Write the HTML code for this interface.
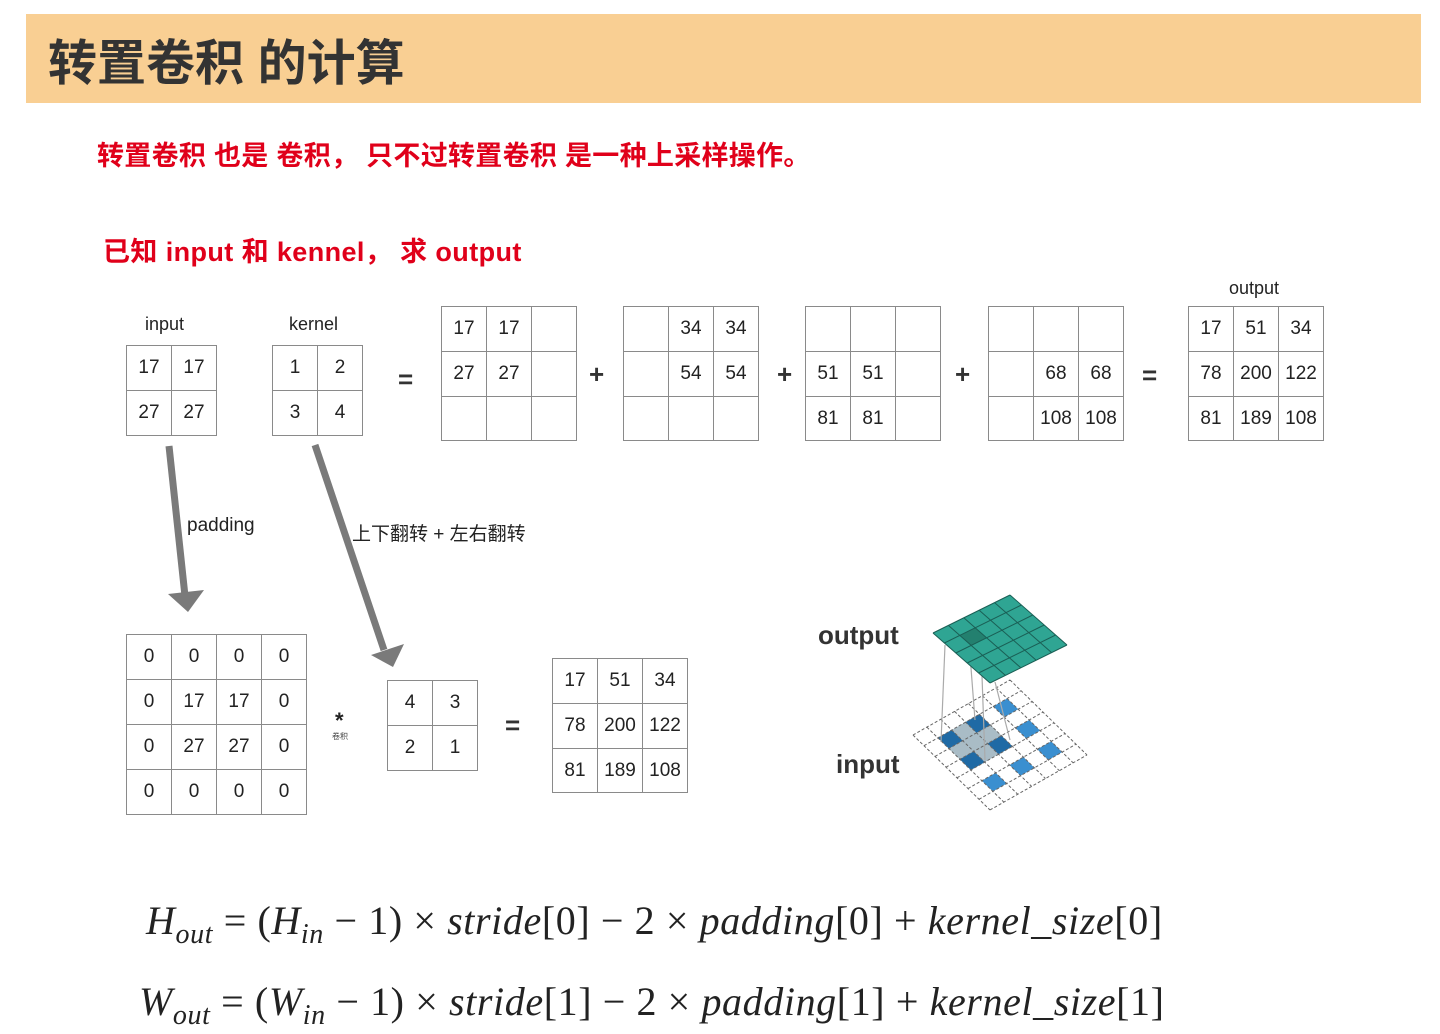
<!DOCTYPE html>
<html><head><meta charset="utf-8"><style>
body{margin:0;width:1440px;height:1034px;background:#fff;position:relative;overflow:hidden;font-family:"Liberation Sans","Noto Sans CJK SC",sans-serif;}
.a{position:absolute;}
.g{position:absolute;border-collapse:collapse;}
.g td{border:1.5px solid #8a8a8a;text-align:center;font-size:19px;color:#222;padding:0;}
.lb{position:absolute;font-size:18px;color:#222;white-space:nowrap;}
.op{position:absolute;font-size:26px;font-weight:bold;color:#333;}
.red{position:absolute;color:#e0001a;font-weight:bold;font-size:27px;font-family:"Liberation Sans","Noto Sans CJK SC",sans-serif;white-space:nowrap;}
.f{position:absolute;font-family:"Liberation Serif","DejaVu Serif",serif;font-style:italic;font-size:40px;letter-spacing:0.6px;color:#222;white-space:nowrap;}
.f span.n{font-style:normal;}
</style></head><body>
<div class="a" style="left:26px;top:14px;width:1395px;height:89px;background:#f9cf93;"></div>
<div class="a" style="left:48px;top:24px;font-size:49px;font-weight:bold;color:#333;font-family:'Liberation Sans','Noto Sans CJK SC',sans-serif;white-space:nowrap;">转置卷积 的计算</div>
<div class="red" style="left:97px;top:134px;letter-spacing:0.3px;">转置卷积 也是 卷积， 只不过转置卷积 是一种上采样操作。</div>
<div class="red" style="left:103px;top:230px;letter-spacing:0.4px;">已知 input 和 kennel， 求 output</div>

<div class="lb" style="left:145px;top:314px;">input</div>
<div class="lb" style="left:289px;top:314px;">kernel</div>
<div class="lb" style="left:1229px;top:278px;">output</div>

<table class="g" style="left:126px;top:345px;"><tr><td style="width:44px;height:44px">17</td><td style="width:44px">17</td></tr><tr><td style="height:44px">27</td><td>27</td></tr></table>
<table class="g" style="left:272px;top:345px;"><tr><td style="width:44px;height:44px">1</td><td style="width:44px">2</td></tr><tr><td style="height:44px">3</td><td>4</td></tr></table>
<div class="op" style="left:398px;top:364px;">=</div>

<table class="g" style="left:441px;top:306px;"><tr><td style="width:44px;height:44px">17</td><td style="width:44px">17</td><td style="width:44px"></td></tr><tr><td style="height:44px">27</td><td>27</td><td></td></tr><tr><td style="height:43px"></td><td></td><td></td></tr></table>
<div class="op" style="left:589px;top:359px;">+</div>
<table class="g" style="left:623px;top:306px;"><tr><td style="width:44px;height:44px"></td><td style="width:44px">34</td><td style="width:44px">34</td></tr><tr><td style="height:44px"></td><td>54</td><td>54</td></tr><tr><td style="height:43px"></td><td></td><td></td></tr></table>
<div class="op" style="left:777px;top:359px;">+</div>
<table class="g" style="left:805px;top:306px;"><tr><td style="width:44px;height:44px"></td><td style="width:44px"></td><td style="width:44px"></td></tr><tr><td style="height:44px">51</td><td>51</td><td></td></tr><tr><td style="height:43px">81</td><td>81</td><td></td></tr></table>
<div class="op" style="left:955px;top:359px;">+</div>
<table class="g" style="left:988px;top:306px;"><tr><td style="width:44px;height:44px"></td><td style="width:44px"></td><td style="width:44px"></td></tr><tr><td style="height:44px"></td><td>68</td><td>68</td></tr><tr><td style="height:43px"></td><td>108</td><td>108</td></tr></table>
<div class="op" style="left:1142px;top:360px;">=</div>
<table class="g" style="left:1188px;top:306px;"><tr><td style="width:44px;height:44px">17</td><td style="width:44px">51</td><td style="width:44px">34</td></tr><tr><td style="height:44px">78</td><td>200</td><td>122</td></tr><tr><td style="height:43px">81</td><td>189</td><td>108</td></tr></table>

<div class="lb" style="left:187px;top:515px;font-size:19px;">padding</div>
<div class="lb" style="left:352px;top:519px;font-size:19px;">上下翻转 + 左右翻转</div>

<table class="g" style="left:126px;top:634px;"><tr><td style="width:44px;height:44px">0</td><td style="width:44px">0</td><td style="width:44px">0</td><td style="width:44px">0</td></tr><tr><td style="height:44px">0</td><td>17</td><td>17</td><td>0</td></tr><tr><td style="height:44px">0</td><td>27</td><td>27</td><td>0</td></tr><tr><td style="height:44px">0</td><td>0</td><td>0</td><td>0</td></tr></table>
<div class="a" style="left:335px;top:708px;font-size:22px;font-weight:bold;color:#222;">*</div>
<div class="a" style="left:332px;top:731px;font-size:8px;color:#444;">卷积</div>
<table class="g" style="left:387px;top:680px;"><tr><td style="width:44px;height:44px">4</td><td style="width:44px">3</td></tr><tr><td style="height:44px">2</td><td>1</td></tr></table>
<div class="op" style="left:505px;top:710px;">=</div>
<table class="g" style="left:552px;top:658px;"><tr><td style="width:44px;height:44px">17</td><td style="width:44px">51</td><td style="width:44px">34</td></tr><tr><td style="height:44px">78</td><td>200</td><td>122</td></tr><tr><td style="height:43px">81</td><td>189</td><td>108</td></tr></table>

<div class="a" style="left:818px;top:620px;font-size:26px;font-weight:bold;color:#333;">output</div>
<div class="a" style="left:836px;top:749px;font-size:26px;font-weight:bold;color:#333;">input</div>

<svg class="a" style="left:0;top:0" width="1440" height="1034">
<g stroke="#7a7a7a" stroke-width="7" fill="none">
<line x1="169" y1="446" x2="185" y2="596"/>
<line x1="315" y1="445" x2="384" y2="650"/>
</g>
<g fill="#7a7a7a">
<polygon points="168,594 204,590 188,612"/>
<polygon points="371,655 404,644 393,667"/>
</g>
<g transform="matrix(13.86,-7.86,11,10.71,913,735)">
<g fill="#3a8fd0">
<rect x="1" y="1" width="1" height="1"/><rect x="3" y="1" width="1" height="1"/><rect x="5" y="1" width="1" height="1"/>
<rect x="1" y="3" width="1" height="1"/><rect x="3" y="3" width="1" height="1"/><rect x="5" y="3" width="1" height="1"/>
<rect x="1" y="5" width="1" height="1"/><rect x="3" y="5" width="1" height="1"/><rect x="5" y="5" width="1" height="1"/>
</g>
<rect x="1" y="1" width="3" height="3" fill="#a9bcc6"/>
<g fill="#1f6aa5">
<rect x="1" y="1" width="1" height="1"/><rect x="3" y="1" width="1" height="1"/><rect x="1" y="3" width="1" height="1"/><rect x="3" y="3" width="1" height="1"/>
</g>
<path vector-effect="non-scaling-stroke" stroke="#666" stroke-width="1" stroke-dasharray="3,2" fill="none" d="M0 0H7M0 1H7M0 2H7M0 3H7M0 4H7M0 5H7M0 6H7M0 7H7M0 0V7M1 0V7M2 0V7M3 0V7M4 0V7M5 0V7M6 0V7M7 0V7"/>
</g>
<g stroke="#aaa" stroke-width="1.2">
<line x1="941" y1="742" x2="945" y2="645"/>
<line x1="985" y1="760" x2="982" y2="676"/>
<line x1="975" y1="720" x2="970" y2="655"/>
<line x1="1010" y1="740" x2="995" y2="682"/>
</g>
<g transform="matrix(15.4,-7.6,11.4,10,933,633)">
<rect x="0" y="0" width="5" height="5" fill="#2fa593"/>
<rect x="1" y="1" width="1" height="1" fill="#23806f"/>
<path vector-effect="non-scaling-stroke" stroke="#1a5f55" stroke-width="1" fill="none" d="M0 0H5M0 1H5M0 2H5M0 3H5M0 4H5M0 5H5M0 0V5M1 0V5M2 0V5M3 0V5M4 0V5M5 0V5"/>
</g>
</svg>

<div class="f" style="left:146px;top:897px;">H<sub style="font-size:28px">out</sub> <span class="n">= (</span>H<sub style="font-size:28px">in</sub> <span class="n">− 1) × </span>stride<span class="n">[0] − 2 × </span>padding<span class="n">[0] + </span>kernel_size<span class="n">[0]</span></div>
<div class="f" style="left:139px;top:978px;">W<sub style="font-size:28px">out</sub> <span class="n">= (</span>W<sub style="font-size:28px">in</sub> <span class="n">− 1) × </span>stride<span class="n">[1] − 2 × </span>padding<span class="n">[1] + </span>kernel_size<span class="n">[1]</span></div>
</body></html>
